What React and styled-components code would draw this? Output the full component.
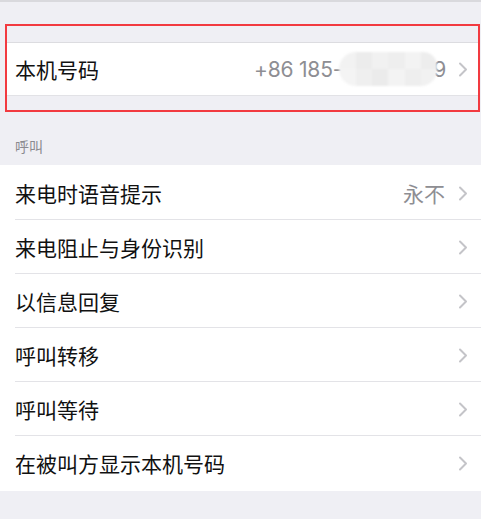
import React from "react";
import styled, { createGlobalStyle } from "styled-components";

const GlobalStyle = createGlobalStyle`
  html, body {
    margin: 0;
    padding: 0;
    background: #efeff4;
    font-family: "Noto Sans CJK SC", "Noto Sans", sans-serif;
  }
`;

const Page = styled.div`
  width: 481px;
  height: 519px;
  overflow: hidden;
  background: #efeff4;
  border-top: 2px solid #d9d9dd;
  box-sizing: border-box;
`;

const Highlight = styled.div`
  margin: 22px 1px 0 5px;
  border: 2px solid #f23a40;
  padding: 16px 0 14px;
`;

const Group = styled.div`
  background: #fff;
  border-top: 1px solid ${(p) => (p.$top ? "#dcdce0" : "transparent")};
  border-bottom: 1px solid ${(p) => (p.$bottom ? "#e2e2e6" : "transparent")};
`;

const Row = styled.div`
  display: flex;
  align-items: center;
  height: ${(p) => p.$h || 54}px;
  padding: 0 ${(p) => p.$pr || 13}px 0 ${(p) => p.$pl || 15}px;
  box-sizing: border-box;
  position: relative;
  ${(p) =>
    p.$line &&
    `
    &::after {
      content: "";
      position: absolute;
      left: 15px;
      right: 0;
      bottom: 0;
      height: 1px;
      background: #e3e3e7;
    }
  `}
`;

const Label = styled.span`
  flex: 1;
  font-size: 21px;
  color: #111;
  line-height: 1;
  white-space: nowrap;
`;

const Value = styled.span`
  display: flex;
  align-items: center;
  font-size: 21px;
  color: #8e8e93;
  line-height: 1;
  margin-right: 13px;
  white-space: nowrap;
`;

const Phone = styled.span`
  display: flex;
  align-items: center;
  font-family: "Inter", "Roboto", sans-serif;
  font-size: 21px;
  color: #8e8e93;
  margin-right: 12px;
  letter-spacing: -0.2px;
`;

const Blur = styled.span`
  display: grid;
  grid-template-columns: repeat(6, 1fr);
  grid-template-rows: repeat(2, 1fr);
  width: 98px;
  height: 34px;
  margin: 0 -4px 0 -3px;
  border-radius: 17px 14px 16px 17px;
  overflow: hidden;
  filter: blur(1.2px);
  position: relative;
`;

const Cell = styled.span`
  background: ${(p) => p.$c};
`;

const Header = styled.div`
  height: 53px;
  display: flex;
  align-items: flex-end;
  padding: 0 0 9px 15px;
  box-sizing: border-box;
  font-size: 14px;
  color: #8a8a8f;
`;

const Chevron = () => (
  <svg width="10" height="15" viewBox="0 0 10 15">
    <polyline
      points="2,1.5 8,7.5 2,13.5"
      fill="none"
      stroke="#c4c4c8"
      strokeWidth="2"
      strokeLinecap="round"
      strokeLinejoin="round"
    />
  </svg>
);

const cells = [
  "#f2f2f2", "#ececec", "#f1f1f1", "#eeeeee", "#f3f3f3", "#ededed",
  "#f4f4f4", "#efefef", "#ebebeb", "#f3f3f3", "#eeeeee", "#f1f1f1",
];

const rows = [
  { label: "来电时语音提示", value: "永不" },
  { label: "来电阻止与身份识别" },
  { label: "以信息回复" },
  { label: "呼叫转移" },
  { label: "呼叫等待" },
  { label: "在被叫方显示本机号码" },
];

export default function App() {
  return (
    <Page>
      <GlobalStyle />
      <Highlight>
        <Group $top $bottom>
          <Row $h={52} $pl={8} $pr={10}>
            <Label>本机号码</Label>
            <Phone>
              +86 185-
              <Blur>
                {cells.map((c, i) => (
                  <Cell key={i} $c={c} />
                ))}
              </Blur>
              9
            </Phone>
            <Chevron />
          </Row>
        </Group>
      </Highlight>
      <Header>呼叫</Header>
      <Group>
        {rows.map((r, i) => (
          <Row key={r.label} $line={i < rows.length - 1}>
            <Label>{r.label}</Label>
            {r.value && <Value>{r.value}</Value>}
            <Chevron />
          </Row>
        ))}
      </Group>
    </Page>
  );
}
